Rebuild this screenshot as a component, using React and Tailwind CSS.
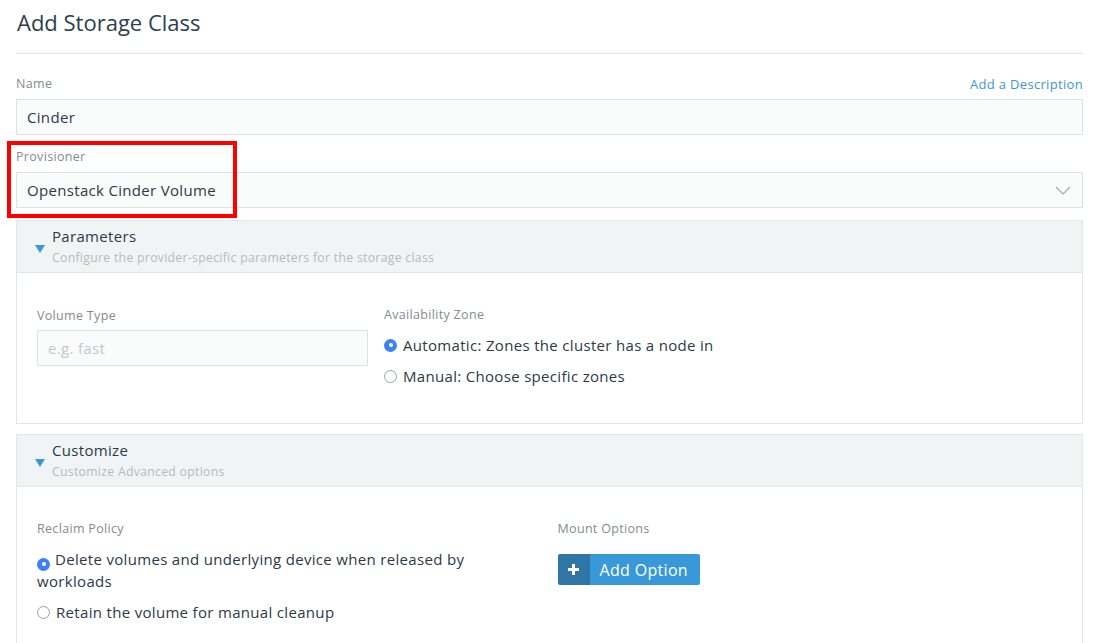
import React from "react";

const font = { fontFamily: '"Open Sans", "Liberation Sans", sans-serif', letterSpacing: "0.02em" };

function Radio({ checked }) {
  return checked ? (
    <span className="inline-flex w-[13px] h-[13px] rounded-full bg-[#3b82f6] items-center justify-center shrink-0">
      <span className="w-[4px] h-[4px] rounded-full bg-white" />
    </span>
  ) : (
    <span className="inline-block w-[13px] h-[13px] rounded-full border border-[#9aa0a4] bg-white shrink-0" />
  );
}

function Tri() {
  return (
    <svg width="10" height="8" viewBox="0 0 10 8" className="shrink-0 mt-[4px]">
      <polygon points="0,0 10,0 5,8" fill="#3d98d3" />
    </svg>
  );
}

function Header({ title, sub }) {
  return (
    <div className="flex items-center h-[53px] bg-[#f1f4f5] border border-[#e2e7e9] pl-[18px]">
      <Tri />
      <div className="ml-[7px] -mt-[2px]">
        <div className="text-[15px] leading-[20px] text-[#2d3a46]">{title}</div>
        <div className="text-[12.2px] leading-[16px] text-[#b4babe] mt-[4px]">{sub}</div>
      </div>
    </div>
  );
}

const label = "text-[12.5px] text-[#838b91] leading-[16px]";

export default function App() {
  return (
    <div className="relative w-[1093px] h-[643px] overflow-hidden bg-white px-[16px] pr-[10px]" style={font}>
      <div className="text-[22px] leading-[30px] text-[#2d3e50] pt-[7px] pl-[1px] tracking-normal">Add Storage Class</div>
      <div className="mt-[16px] border-t border-[#e3e8ea]" />

      <div className="mt-[22px] flex justify-between items-end">
        <span className={label}>Name</span>
        <span className="text-[13px] text-[#3d98d3] leading-[16px]">Add a Description</span>
      </div>
      <div className="mt-[7px] h-[36px] bg-[#fafbfb] border border-[#dde3e5] flex items-center px-[10px] text-[15px] text-[#2d3a46]">
        Cinder
      </div>

      <div className="mt-[14px] text-[12.5px] text-[#838b91] leading-[16px]">Provisioner</div>
      <div className="mt-[7px] h-[36px] bg-[#fafbfb] border border-[#dde3e5] flex items-center justify-between px-[10px] text-[15px] text-[#2d3a46]">
        <span>Openstack Cinder Volume</span>
        <svg width="16" height="9" viewBox="0 0 16 9" className="mr-[1px]">
          <polyline points="1,1 8,8 15,1" fill="none" stroke="#a3a9ad" strokeWidth="1.2" />
        </svg>
      </div>

      <div className="mt-[12px]">
        <Header title="Parameters" sub="Configure the provider-specific parameters for the storage class" />
        <div className="border border-t-0 border-[#e2e7e9] h-[151px] px-[20px] pt-[35px]">
          <div className="grid grid-cols-3 gap-[16px]">
            <div>
              <div className={label}>Volume Type</div>
              <div className="mt-[6px] h-[36px] bg-[#fafbfb] border border-[#dde3e5] flex items-center px-[10px] text-[15px] text-[#c3c8cb]">
                e.g. fast
              </div>
            </div>
            <div>
              <div className={label + " -mt-[1px]"}>Availability Zone</div>
              <div className="mt-[12px] flex items-center gap-[6px] text-[15px] text-[#2d3a46] leading-[20px] whitespace-nowrap">
                <Radio checked /> Automatic: Zones the cluster has a node in
              </div>
              <div className="mt-[11px] flex items-center gap-[6px] text-[15px] text-[#2d3a46] leading-[20px] whitespace-nowrap">
                <Radio /> Manual: Choose specific zones
              </div>
            </div>
          </div>
        </div>
      </div>

      <div className="mt-[10px]">
        <Header title="Customize" sub="Customize Advanced options" />
        <div className="border border-t-0 border-[#e2e7e9] h-[200px] px-[20px] pt-[34px]">
          <div className="grid grid-cols-2 gap-[16px]">
            <div>
              <div className={label}>Reclaim Policy</div>
              <div className="mt-[12px] text-[15px] text-[#2d3a46] leading-[21px] pr-[30px]">
                <span className="inline-block align-[-1px] mr-[5px]"><Radio checked /></span>
                Delete volumes and underlying device when released by workloads
              </div>
              <div className="mt-[10px] flex items-center gap-[6px] text-[15px] text-[#2d3a46] leading-[20px]">
                <Radio /> Retain the volume for manual cleanup
              </div>
            </div>
            <div>
              <div className={label}>Mount Options</div>
              <div className="mt-[17px] inline-flex h-[31px] rounded-[2px] overflow-hidden">
                <span className="w-[32px] bg-[#2f76a6] flex items-center justify-center text-white">
                  <svg width="11" height="11" viewBox="0 0 11 11">
                    <rect x="4" y="0" width="3" height="11" fill="#fff" />
                    <rect x="0" y="4" width="11" height="3" fill="#fff" />
                  </svg>
                </span>
                <span className="w-[110px] bg-[#3898d8] flex items-center pl-[10px] text-white text-[16px]">
                  Add Option
                </span>
              </div>
            </div>
          </div>
        </div>
      </div>

      <div className="absolute left-[7px] top-[141px] w-[230px] h-[77px] border-[4px] border-[#ff0000] pointer-events-none" />
    </div>
  );
}
